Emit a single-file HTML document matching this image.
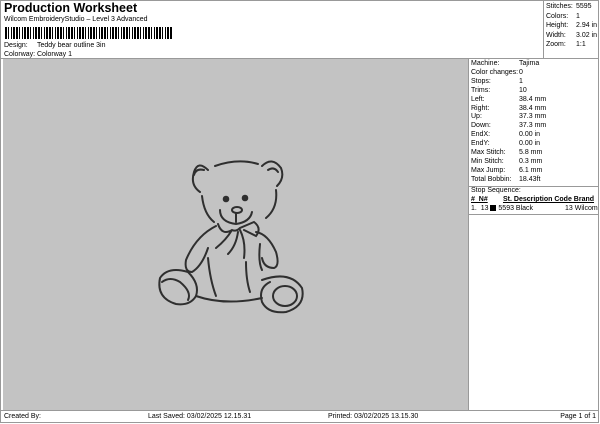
<html><head><style>
body{margin:0;width:600px;height:424px;background:#fff;font-family:"Liberation Sans",sans-serif;position:relative;overflow:hidden;font-size:7px;color:#000}
.a{position:absolute;white-space:nowrap}
</style></head><body>
<div class="a" style="left:0;top:0;width:599px;height:423px;border:1px solid #999;box-sizing:border-box"></div>
<div class="a" style="left:4px;top:1px;font-size:12.5px;font-weight:bold">Production Worksheet</div>
<div class="a" style="left:4px;top:16px">Wilcom EmbroideryStudio – Level 3 Advanced</div>
<div class="a" style="left:5px;top:27px;width:168px;height:12px;background:repeating-linear-gradient(90deg,#000 0 2px,#fff 2px 3px,#000 3px 4px,#fff 4px 6px,#000 6px 7px,#fff 7px 8px,#000 8px 10px,#fff 10px 11px)"></div>
<div class="a" style="left:4px;top:42px">Design:</div><div class="a" style="left:37px;top:42px">Teddy bear outline 3in</div>
<div class="a" style="left:4px;top:51px">Colorway:</div><div class="a" style="left:37px;top:51px">Colorway 1</div>
<div class="a" style="left:543px;top:0;width:56px;height:58px;border-left:1px solid #999"></div>
<div class="a" style="left:546px;top:2px;line-height:9.5px">Stitches:<br>Colors:<br>Height:<br>Width:<br>Zoom:</div>
<div class="a" style="left:576px;top:2px;line-height:9.5px">5595<br>1<br>2.94 in<br>3.02 in<br>1:1</div>
<div class="a" style="left:1px;top:58px;width:598px;border-top:1px solid #999"></div>
<div class="a" style="left:3px;top:59px;width:465px;height:351px;background:#c3c3c3"></div>
<div class="a" style="left:468px;top:59px;width:1px;height:351px;background:#999"></div>
<div class="a" style="left:471px;top:60px;line-height:8.9px">Machine:<br>Color changes:<br>Stops:<br>Trims:<br>Left:<br>Right:<br>Up:<br>Down:<br>EndX:<br>EndY:<br>Max Stitch:<br>Min Stitch:<br>Max Jump:<br>Total Bobbin:</div>
<div class="a" style="left:519px;top:60px;line-height:8.9px">Tajima<br>0<br>1<br>10<br>38.4 mm<br>38.4 mm<br>37.3 mm<br>37.3 mm<br>0.00 in<br>0.00 in<br>5.8 mm<br>0.3 mm<br>6.1 mm<br>18.43ft</div>
<div class="a" style="left:469px;top:186px;width:130px;border-top:1px solid #999"></div>
<div class="a" style="left:471px;top:187px">Stop Sequence:</div>
<div class="a" style="left:471px;top:196px;font-weight:bold;text-decoration:underline">#&nbsp; N#</div>
<div class="a" style="left:503px;top:196px;font-weight:bold;text-decoration:underline">St. Description Code Brand</div>
<div class="a" style="left:471px;top:205px">1.&nbsp; 13 <span style="display:inline-block;width:6px;height:6px;background:#000;vertical-align:-1px"></span> 5593 Black</div>
<div class="a" style="left:565px;top:205px">13 Wilcom</div>
<div class="a" style="left:469px;top:214px;width:130px;border-top:1px solid #999"></div>
<div class="a" style="left:1px;top:410px;width:598px;border-top:1px solid #999"></div>
<div class="a" style="left:4px;top:413px">Created By:</div>
<div class="a" style="left:148px;top:413px">Last Saved: 03/02/2025 12.15.31</div>
<div class="a" style="left:328px;top:413px">Printed: 03/02/2025 13.15.30</div>
<div class="a" style="right:4px;top:413px">Page 1 of 1</div>
<svg class="a" style="left:0;top:0" width="600" height="424" fill="none" stroke="#2f2f2f" stroke-width="2" stroke-linecap="round">
<path d="M208 170 Q198 160 194 172 Q190 185 200 192 M194 175 Q196 168 204 170 M215 166 Q238 158 258 164 M262 166 Q272 156 281 168 Q285 178 277 186 M268 170 Q274 166 278 172 M202 196 Q204 214 214 222 M276 190 Q278 208 266 218"/>
<circle cx="226" cy="199" r="2.3" fill="#2f2f2f"/><circle cx="245" cy="198" r="2.3" fill="#2f2f2f"/>
<ellipse cx="237" cy="210" rx="5" ry="3"/>
<path d="M220 210 Q220 222 236 224 Q250 222 252 212 M236 213 V222"/>
<path d="M218 224 Q222 236 232 230 Q236 232 240 228 L254 222 Q262 228 256 236 L244 230 M232 230 Q226 240 216 248 M240 230 Q246 242 244 258 M238 232 Q236 246 228 254"/>
<path d="M216 226 Q196 236 186 260 Q184 272 192 272 Q202 266 208 248 M256 232 Q268 234 276 252 Q280 266 274 268 Q264 268 262 258 M260 244 Q258 262 262 270"/>
<path d="M208 258 Q210 280 216 296 M246 262 Q246 280 250 292"/>
<path d="M188 272 Q168 266 160 278 Q156 298 176 304 Q190 306 196 296 Q200 284 188 272 M162 282 Q170 276 180 282 Q192 292 188 300"/>
<path d="M196 296 Q225 306 262 298 M262 280 Q290 270 302 288 Q306 306 286 312 Q268 314 262 302 Q258 288 270 282"/>
<ellipse cx="285" cy="296" rx="12" ry="10"/>
</svg>
</body></html>
